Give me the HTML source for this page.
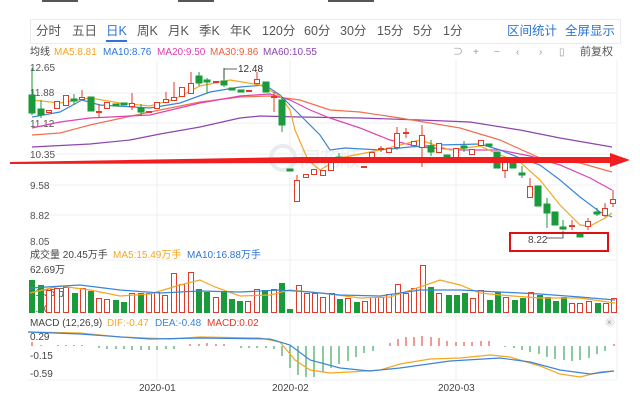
<!DOCTYPE html>
<html><head><meta charset="utf-8"><style>
html,body{margin:0;padding:0;background:#fff;width:640px;height:404px;overflow:hidden}
svg{display:block}
text{font-family:"Liberation Sans","Noto Sans CJK SC",sans-serif}
</style></head><body>
<svg width="640" height="404" viewBox="0 0 640 404" xmlns="http://www.w3.org/2000/svg">
<!-- clipped top text -->
<g fill="#555"><rect x="42" y="0" width="36" height="2"/><rect x="178" y="0" width="36" height="2"/><rect x="328" y="0" width="46" height="2"/></g>
<!-- toolbar -->
<rect x="30.5" y="19.5" width="590" height="24" fill="#fff" stroke="#e8ecf0"/>
<g font-size="12.5" fill="#555">
<text x="36" y="35">分时</text><text x="72" y="35">五日</text>
<text x="106" y="35" fill="#2b75d6">日K</text>
<text x="137" y="35">周K</text><text x="168" y="35">月K</text><text x="199" y="35">季K</text><text x="230" y="35">年K</text>
<text x="262" y="35">120分</text><text x="304" y="35">60分</text><text x="340" y="35">30分</text><text x="377" y="35">15分</text><text x="413" y="35">5分</text><text x="443" y="35">1分</text>
<text x="507" y="35" fill="#2b75d6">区间统计</text><text x="565" y="35" fill="#2b75d6">全屏显示</text>
</g>
<rect x="106" y="40" width="21" height="2" fill="#2b75d6"/>
<!-- legend -->
<g font-size="10">
<text x="30" y="55" fill="#444">均线</text>
<text x="54" y="55" fill="#f5a623">MA5:8.81</text>
<text x="103" y="55" fill="#2b75d6">MA10:8.76</text>
<text x="157" y="55" fill="#e040b0">MA20:9.50</text>
<text x="210" y="55" fill="#f06040">MA30:9.86</text>
<text x="263" y="55" fill="#8e44ad">MA60:10.55</text>
</g>
<g font-size="10" fill="#999">
<text x="453" y="55">⊃</text><text x="473" y="55">+</text><text x="494" y="55">−</text><text x="516" y="55">‹</text><text x="539" y="55">›</text><text x="559" y="55">▯</text>
<text x="580" y="55" fill="#555" font-size="11">前复权</text>
</g>
<!-- grid -->
<g stroke="#eceff2" stroke-width="1">
<line x1="28" y1="93" x2="617" y2="93"/><line x1="28" y1="123" x2="617" y2="123"/><line x1="28" y1="154" x2="617" y2="154"/><line x1="28" y1="185" x2="617" y2="185"/><line x1="28" y1="215" x2="617" y2="215"/>
<line x1="157" y1="60" x2="157" y2="380"/><line x1="290" y1="60" x2="290" y2="380"/><line x1="456" y1="60" x2="456" y2="380"/>
<line x1="617" y1="60" x2="617" y2="380"/>
</g>
<g font-size="10" fill="#555">
<text x="30" y="71">12.65</text><text x="30" y="96">11.88</text><text x="30" y="127">11.12</text><text x="30" y="158">10.35</text><text x="30" y="189">9.58</text><text x="30" y="219">8.82</text><text x="30" y="245">8.05</text>
</g>
<!-- watermark -->
<circle cx="283" cy="158" r="12" fill="none" stroke="#e6ecef" stroke-width="4"/>
<text x="300" y="166" font-size="20" fill="#e8edf0">同花顺</text>
<!-- MA lines -->
<g fill="none" stroke-width="1.2">
<polyline stroke="#8e44ad" points="32,147 90,144 130,140 160,134 200,127 240,118 260,116 300,117 360,118 420,120 470,122 520,130 560,138 612,147"/>
<polyline stroke="#f07050" points="32,135 60,133 90,125 150,112 200,102 240,97 270,96 300,100 330,110 360,112 400,118 430,123 460,128 500,140 540,158 580,163 612,172"/>
<polyline stroke="#e040b0" points="32,128 60,122 90,118 150,115 200,103 240,96 270,94 290,100 310,110 330,118 360,128 390,140 420,147 460,150 500,150 530,156 560,165 590,178 612,190"/>
<polyline stroke="#3a85d8" points="32,117 60,112 82,100 100,105 150,108 180,103 210,92 240,87 265,85 280,95 300,115 320,135 330,150 345,148 380,150 410,147 440,145 480,144 500,150 520,158 540,165 560,180 580,197 600,212 612,217"/>
<polyline stroke="#f5a623" points="32,100 60,103 90,98 120,103 150,106 175,99 200,86 230,80 260,85 280,96 290,110 295,130 308,160 320,170 340,158 380,150 420,140 450,150 480,146 500,155 520,162 540,180 560,205 580,225 590,226 605,218 612,213"/>
</g>
<!-- candles -->
<g stroke-width="1">
<g stroke="#1a9a3a" fill="#1a9a3a">
<line x1="32" y1="68" x2="32" y2="115"/><rect x="29" y="95" width="6" height="18"/>
<line x1="41" y1="100" x2="41" y2="118"/><rect x="38" y="109" width="6" height="6"/>
<rect x="71" y="99" width="6" height="2"/><line x1="74" y1="94" x2="74" y2="105"/>
<rect x="88" y="97" width="6" height="14"/>
<rect x="113" y="104" width="6" height="2"/><rect x="121" y="103" width="6" height="2"/>
<rect x="138" y="108" width="6" height="4"/><line x1="141" y1="104" x2="141" y2="116"/>
<rect x="196" y="76" width="6" height="7"/><line x1="199" y1="72" x2="199" y2="86"/>
<rect x="204" y="80" width="6" height="2"/><line x1="207" y1="78" x2="207" y2="93"/>
<rect x="221" y="81" width="6" height="4"/><line x1="224" y1="68" x2="224" y2="87"/>
<rect x="229" y="88" width="6" height="2"/><rect x="238" y="90" width="6" height="2"/>
<rect x="263" y="82" width="6" height="10"/>
<rect x="279" y="100" width="6" height="25"/><line x1="282" y1="97" x2="282" y2="132"/>
<rect x="287" y="169" width="6" height="2"/>
<rect x="336" y="157" width="6" height="2"/><line x1="339" y1="153" x2="339" y2="162"/>
<rect x="353" y="158" width="6" height="4"/>
<rect x="428" y="146" width="6" height="6"/><line x1="431" y1="140" x2="431" y2="156"/>
<rect x="444" y="155" width="6" height="3"/>
<rect x="461" y="146" width="6" height="2"/><line x1="464" y1="141" x2="464" y2="152"/>
<rect x="486" y="144" width="6" height="2"/>
<rect x="494" y="152" width="6" height="16"/>
<rect x="510" y="162" width="6" height="6"/>
<rect x="519" y="173" width="6" height="2"/><line x1="522" y1="166" x2="522" y2="178"/>
<rect x="535" y="186" width="6" height="20"/>
<rect x="544" y="204" width="6" height="9"/><line x1="547" y1="198" x2="547" y2="228"/>
<rect x="552" y="212" width="6" height="13"/>
<rect x="560" y="227" width="6" height="2"/><line x1="563" y1="220" x2="563" y2="230"/>
<rect x="577" y="233" width="6" height="4"/>
<rect x="594" y="212" width="6" height="2"/><line x1="597" y1="208" x2="597" y2="216"/>
</g>
<g stroke="#e03a2a" fill="#fff">
<rect x="46.5" y="110.5" width="5" height="2"/>
<rect x="54.5" y="101.5" width="5" height="7"/>
<rect x="63.5" y="95.5" width="5" height="10"/>
<line x1="82" y1="90" x2="82" y2="100"/><rect x="79.5" y="97.5" width="5" height="2"/>
<line x1="99" y1="104" x2="99" y2="118"/><rect x="96.5" y="111.5" width="5" height="1"/>
<rect x="104.5" y="102.5" width="5" height="6"/>
<line x1="132" y1="93" x2="132" y2="110"/><rect x="129.5" y="103.5" width="5" height="3"/>
<rect x="146.5" y="111.5" width="5" height="1"/>
<rect x="154.5" y="102.5" width="5" height="6"/>
<line x1="166" y1="92" x2="166" y2="102"/><rect x="163.5" y="99.5" width="5" height="3"/>
<line x1="174" y1="82" x2="174" y2="100"/><rect x="171.5" y="97.5" width="5" height="3"/>
<rect x="179.5" y="87.5" width="5" height="9"/>
<line x1="191" y1="72" x2="191" y2="93"/><rect x="188.5" y="83.5" width="5" height="10"/>
<rect x="213.5" y="81.5" width="5" height="1"/>
<rect x="246.5" y="90.5" width="5" height="1"/>
<line x1="257" y1="72" x2="257" y2="84"/><rect x="254.5" y="79.5" width="5" height="4"/>
<line x1="274" y1="92" x2="274" y2="112"/><rect x="271.5" y="96.5" width="5" height="1"/>
<line x1="297" y1="175" x2="297" y2="202"/><rect x="294.5" y="180.5" width="5" height="21"/>
<rect x="303.5" y="174.5" width="5" height="3"/>
<rect x="311.5" y="169.5" width="5" height="5"/>
<rect x="320.5" y="170.5" width="5" height="5"/>
<rect x="328.5" y="157.5" width="5" height="13"/>
<rect x="344.5" y="157.5" width="5" height="3"/>
<rect x="361.5" y="166.5" width="5" height="1"/>
<rect x="369.5" y="152.5" width="5" height="8"/>
<line x1="381" y1="146" x2="381" y2="152"/><rect x="378.5" y="148.5" width="5" height="1"/>
<rect x="386.5" y="148.5" width="5" height="4"/>
<line x1="397" y1="127" x2="397" y2="150"/><rect x="394.5" y="133.5" width="5" height="14"/>
<line x1="406" y1="128" x2="406" y2="138"/><rect x="403.5" y="132.5" width="5" height="1"/>
<rect x="411.5" y="141.5" width="5" height="4"/>
<line x1="422" y1="125" x2="422" y2="167"/><rect x="419.5" y="135.5" width="5" height="12"/>
<rect x="436.5" y="143.5" width="5" height="9"/>
<rect x="453.5" y="148.5" width="5" height="9"/>
<rect x="469.5" y="149.5" width="5" height="5"/>
<rect x="478.5" y="140.5" width="5" height="5"/>
<line x1="505" y1="160" x2="505" y2="178"/><rect x="502.5" y="162.5" width="5" height="8"/>
<line x1="530" y1="178" x2="530" y2="198"/><rect x="527.5" y="186.5" width="5" height="11"/>
<line x1="572" y1="220" x2="572" y2="230"/><rect x="569.5" y="225.5" width="5" height="1"/>
<line x1="588" y1="218" x2="588" y2="230"/><rect x="585.5" y="221.5" width="5" height="5"/>
<line x1="605" y1="203" x2="605" y2="217"/><rect x="602.5" y="208.5" width="5" height="7"/>
<line x1="613" y1="190" x2="613" y2="207"/><rect x="610.5" y="199.5" width="5" height="4"/>
</g>
</g>
<!-- 12.48 label -->
<polyline points="224,79 224,69 237,69" fill="none" stroke="#333" stroke-width="0.8"/>
<text x="238" y="72" font-size="10" fill="#333">12.48</text>
<!-- red arrow -->
<polygon points="10,162 10,164 300,163 610,163 610,167 630,160 610,153 610,157 300,157" fill="#f01e1e"/>
<!-- red box -->
<rect x="510" y="233" width="98" height="18" fill="none" stroke="#e01010" stroke-width="2"/>
<polyline points="563,231 563,238 547,238" fill="none" stroke="#333" stroke-width="0.8"/>
<text x="528" y="243" font-size="10" fill="#444">8.22</text>
<!-- volume -->
<line x1="28" y1="260" x2="617" y2="260" stroke="#eceff2"/>
<g font-size="10">
<text x="30" y="258" fill="#444">成交量 20.45万手</text>
<text x="113" y="258" fill="#f5a623">MA5:15.49万手</text>
<text x="187" y="258" fill="#2b75d6">MA10:16.88万手</text>
<text x="30" y="273" fill="#444">62.69万</text>
<text x="30" y="296" fill="#444">31.35万</text>
<text x="30" y="312" fill="#444">0.00</text>
</g>
<g fill="#1a9a3a">
<rect x="29" y="280" width="6" height="33"/><rect x="38" y="285" width="6" height="28"/><rect x="72" y="293" width="6" height="20"/><rect x="88" y="291" width="6" height="22"/><rect x="113" y="300" width="6" height="13"/><rect x="121" y="302" width="6" height="11"/><rect x="138" y="293" width="6" height="20"/><rect x="196" y="289" width="6" height="24"/><rect x="204" y="292" width="6" height="21"/><rect x="221" y="291" width="6" height="22"/><rect x="229" y="299" width="6" height="14"/><rect x="237" y="301" width="6" height="12"/><rect x="262" y="290" width="6" height="23"/><rect x="279" y="283" width="6" height="30"/><rect x="287" y="309" width="6" height="4"/><rect x="337" y="299" width="6" height="14"/><rect x="354" y="302" width="6" height="11"/><rect x="428" y="287" width="6" height="26"/><rect x="446" y="295" width="6" height="18"/><rect x="454" y="295" width="6" height="18"/><rect x="462" y="293" width="6" height="20"/><rect x="487" y="300" width="6" height="13"/><rect x="495" y="292" width="6" height="21"/><rect x="512" y="300" width="6" height="13"/><rect x="520" y="298" width="6" height="15"/><rect x="537" y="295" width="6" height="18"/><rect x="545" y="297" width="6" height="16"/><rect x="553" y="301" width="6" height="12"/><rect x="561" y="297" width="6" height="16"/><rect x="595" y="303" width="6" height="10"/>
</g>
<g fill="#fff" stroke="#e03a2a">
<rect x="46.5" y="290.5" width="5" height="22"/><rect x="54.5" y="288.5" width="5" height="24"/><rect x="63.5" y="287.5" width="5" height="25"/><rect x="80.5" y="288.5" width="5" height="24"/><rect x="96.5" y="298.5" width="5" height="14"/><rect x="104.5" y="299.5" width="5" height="13"/><rect x="129.5" y="293.5" width="5" height="19"/><rect x="146.5" y="293.5" width="5" height="19"/><rect x="154.5" y="292.5" width="5" height="20"/><rect x="162.5" y="295.5" width="5" height="17"/><rect x="171.5" y="273.5" width="5" height="39"/><rect x="179.5" y="284.5" width="5" height="28"/><rect x="188.5" y="272.5" width="5" height="40"/><rect x="213.5" y="297.5" width="5" height="15"/><rect x="245.5" y="301.5" width="5" height="11"/><rect x="254.5" y="289.5" width="5" height="23"/><rect x="271.5" y="289.5" width="5" height="23"/><rect x="296.5" y="285.5" width="5" height="27"/><rect x="304.5" y="293.5" width="5" height="19"/><rect x="312.5" y="293.5" width="5" height="19"/><rect x="320.5" y="297.5" width="5" height="15"/><rect x="329.5" y="293.5" width="5" height="19"/><rect x="345.5" y="298.5" width="5" height="14"/><rect x="362.5" y="301.5" width="5" height="11"/><rect x="370.5" y="297.5" width="5" height="15"/><rect x="378.5" y="297.5" width="5" height="15"/><rect x="386.5" y="294.5" width="5" height="18"/><rect x="395.5" y="284.5" width="5" height="28"/><rect x="403.5" y="293.5" width="5" height="19"/><rect x="411.5" y="288.5" width="5" height="24"/><rect x="420.5" y="265.5" width="5" height="47"/><rect x="436.5" y="293.5" width="5" height="19"/><rect x="470.5" y="298.5" width="5" height="14"/><rect x="478.5" y="290.5" width="5" height="22"/><rect x="503.5" y="297.5" width="5" height="15"/><rect x="528.5" y="292.5" width="5" height="20"/><rect x="569.5" y="303.5" width="5" height="9"/><rect x="577.5" y="303.5" width="5" height="9"/><rect x="586.5" y="301.5" width="5" height="11"/><rect x="603.5" y="303.5" width="5" height="9"/><rect x="611.5" y="298.5" width="5" height="14"/>
</g>
<g fill="none" stroke-width="1.2">
<polyline stroke="#f5a623" points="30,293 60,286 90,290 120,296 150,294 180,285 200,280 215,287 240,296 270,295 290,290 310,292 330,294 360,298 390,297 420,287 440,280 460,285 480,293 500,295 540,298 580,298 615,303"/>
<polyline stroke="#3a85d8" points="30,288 80,285 120,290 160,293 200,291 240,292 280,290 310,292 340,295 380,296 420,290 460,290 500,292 540,294 580,297 615,300"/>
</g>
<!-- MACD -->
<line x1="28" y1="316" x2="617" y2="316" stroke="#eceff2"/>
<g font-size="10">
<text x="30" y="326" fill="#444">MACD (12,26,9)</text>
<text x="107" y="326" fill="#f5a623">DIF:-0.47</text>
<text x="155" y="326" fill="#3a85d8">DEA:-0.48</text>
<text x="207" y="326" fill="#e03a2a">MACD:0.02</text>
<text x="30" y="340" fill="#444">0.29</text>
<text x="30" y="359" fill="#444">-0.15</text>
<text x="30" y="377" fill="#444">-0.59</text>
</g>
<circle cx="610" cy="322" r="5" fill="#eee"/><text x="607" y="325" font-size="8" fill="#999">×</text>
<g stroke-width="1">
<g stroke="#e03a2a">
<line x1="32" y1="346" x2="32" y2="342"/><line x1="41" y1="346" x2="41" y2="345"/><line x1="58" y1="346" x2="58" y2="345"/><line x1="66" y1="346" x2="66" y2="345"/><line x1="74" y1="346" x2="74" y2="345"/><line x1="82" y1="346" x2="82" y2="345"/>
<line x1="190" y1="346" x2="190" y2="344"/><line x1="199" y1="346" x2="199" y2="344"/><line x1="207" y1="346" x2="207" y2="343"/><line x1="216" y1="346" x2="216" y2="344"/><line x1="224" y1="346" x2="224" y2="344"/>
<line x1="398" y1="346" x2="398" y2="339"/><line x1="406" y1="346" x2="406" y2="337"/><line x1="414" y1="346" x2="414" y2="337"/><line x1="422" y1="346" x2="422" y2="336"/><line x1="431" y1="346" x2="431" y2="337"/><line x1="439" y1="346" x2="439" y2="338"/><line x1="447" y1="346" x2="447" y2="341"/><line x1="456" y1="346" x2="456" y2="342"/><line x1="464" y1="346" x2="464" y2="342"/><line x1="472" y1="346" x2="472" y2="342"/><line x1="481" y1="346" x2="481" y2="341"/><line x1="489" y1="346" x2="489" y2="341"/>
<line x1="390" y1="346" x2="390" y2="343"/><line x1="614" y1="346" x2="614" y2="344"/>
</g>
<g stroke="#1a9a3a">
<line x1="99" y1="346" x2="99" y2="348"/><line x1="107" y1="346" x2="107" y2="349"/><line x1="116" y1="346" x2="116" y2="349"/><line x1="124" y1="346" x2="124" y2="349"/><line x1="132" y1="346" x2="132" y2="350"/><line x1="141" y1="346" x2="141" y2="350"/><line x1="149" y1="346" x2="149" y2="350"/><line x1="157" y1="346" x2="157" y2="350"/><line x1="166" y1="346" x2="166" y2="349"/><line x1="174" y1="346" x2="174" y2="349"/>
<line x1="241" y1="346" x2="241" y2="348"/><line x1="249" y1="346" x2="249" y2="348"/><line x1="257" y1="346" x2="257" y2="348"/><line x1="266" y1="346" x2="266" y2="348"/><line x1="274" y1="346" x2="274" y2="349"/>
<line x1="282" y1="346" x2="282" y2="356"/><line x1="290" y1="346" x2="290" y2="368"/><line x1="298" y1="346" x2="298" y2="375"/><line x1="306" y1="346" x2="306" y2="377"/><line x1="314" y1="346" x2="314" y2="377"/><line x1="323" y1="346" x2="323" y2="372"/><line x1="331" y1="346" x2="331" y2="368"/><line x1="339" y1="346" x2="339" y2="364"/><line x1="348" y1="346" x2="348" y2="361"/><line x1="356" y1="346" x2="356" y2="357"/><line x1="364" y1="346" x2="364" y2="353"/><line x1="373" y1="346" x2="373" y2="351"/>
<line x1="505" y1="346" x2="505" y2="347"/><line x1="514" y1="346" x2="514" y2="348"/><line x1="522" y1="346" x2="522" y2="350"/><line x1="530" y1="346" x2="530" y2="352"/><line x1="539" y1="346" x2="539" y2="354"/><line x1="547" y1="346" x2="547" y2="357"/><line x1="555" y1="346" x2="555" y2="359"/><line x1="564" y1="346" x2="564" y2="360"/><line x1="572" y1="346" x2="572" y2="361"/><line x1="580" y1="346" x2="580" y2="360"/><line x1="589" y1="346" x2="589" y2="358"/><line x1="597" y1="346" x2="597" y2="354"/><line x1="605" y1="346" x2="605" y2="351"/>
</g>
</g>
<g fill="none" stroke-width="1.2">
<polyline stroke="#f5a623" points="28,332 80,333 120,337 170,339 200,337 260,338 280,342 295,360 310,370 330,373 350,372 380,370 400,364 430,359 460,358 490,355 510,357 540,366 560,374 580,377 600,372 614,371"/>
<polyline stroke="#3a85d8" points="28,332 80,334 150,339 200,338 270,339 290,345 310,360 340,368 370,371 400,368 450,361 500,358 530,362 560,370 590,374 614,371"/>
</g>
<line x1="28" y1="380" x2="617" y2="380" stroke="#eceff2"/>
<g font-size="10" fill="#444">
<text x="139" y="391">2020-01</text><text x="272" y="391">2020-02</text><text x="438" y="391">2020-03</text>
</g>
</svg>
</body></html>
